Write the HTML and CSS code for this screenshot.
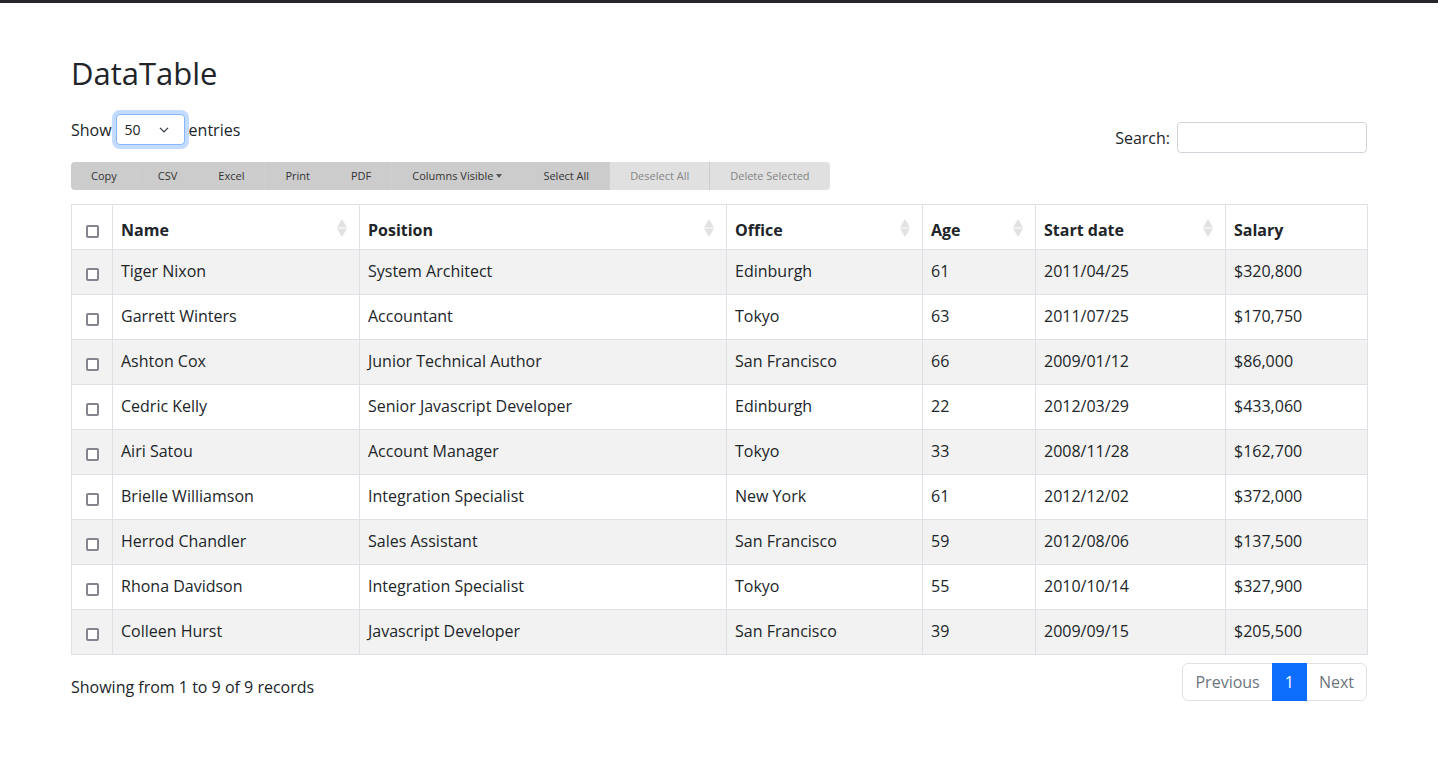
FILE: index.html
```html
<!DOCTYPE html>
<html lang="en">
<head>
<meta charset="utf-8">
<title>DataTable</title>
<link rel="stylesheet" href="styles.css">
</head>
<body>
<div class="topbar"></div>
<main class="container">
  <h2 class="title">DataTable</h2>
  <div class="controls">
    <div class="length">
      <span>Show</span>
      <select class="length-select"><option>50</option></select>
      <span>entries</span>
    </div>
    <div class="search">
      <label for="q">Search:</label>
      <input id="q" class="search-input" type="search">
    </div>
  </div>
  <div class="btn-bar">
    <button class="dt-btn">Copy</button>
    <button class="dt-btn">CSV</button>
    <button class="dt-btn">Excel</button>
    <button class="dt-btn">Print</button>
    <button class="dt-btn">PDF</button>
    <button class="dt-btn">Columns Visible <span class="caret"></span></button>
    <button class="dt-btn">Select All</button>
    <button class="dt-btn disabled">Deselect All</button>
    <button class="dt-btn disabled">Delete Selected</button>
  </div>
  <table class="dt">
    <colgroup>
      <col class="c-chk"><col class="c-name"><col class="c-pos"><col class="c-office"><col class="c-age"><col class="c-date"><col class="c-salary">
    </colgroup>
    <thead>
      <tr>
        <th class="chk-cell"><input class="cb" type="checkbox"></th>
        <th><div class="th-inner"><span>Name</span><svg class="sort" viewBox="0 0 10 18" width="10" height="18"><polygon points="5,0 10,8.6 0,8.6"/><polygon points="0,9.4 10,9.4 5,18"/></svg></div></th>
        <th><div class="th-inner"><span>Position</span><svg class="sort" viewBox="0 0 10 18" width="10" height="18"><polygon points="5,0 10,8.6 0,8.6"/><polygon points="0,9.4 10,9.4 5,18"/></svg></div></th>
        <th><div class="th-inner"><span>Office</span><svg class="sort" viewBox="0 0 10 18" width="10" height="18"><polygon points="5,0 10,8.6 0,8.6"/><polygon points="0,9.4 10,9.4 5,18"/></svg></div></th>
        <th><div class="th-inner"><span>Age</span><svg class="sort" viewBox="0 0 10 18" width="10" height="18"><polygon points="5,0 10,8.6 0,8.6"/><polygon points="0,9.4 10,9.4 5,18"/></svg></div></th>
        <th><div class="th-inner"><span>Start date</span><svg class="sort" viewBox="0 0 10 18" width="10" height="18"><polygon points="5,0 10,8.6 0,8.6"/><polygon points="0,9.4 10,9.4 5,18"/></svg></div></th>
        <th><div class="th-inner"><span>Salary</span></div></th>
      </tr>
    </thead>
    <tbody>
      <tr><td class="chk-cell"><input class="cb" type="checkbox"></td><td>Tiger Nixon</td><td>System Architect</td><td>Edinburgh</td><td>61</td><td>2011/04/25</td><td>$320,800</td></tr>
      <tr><td class="chk-cell"><input class="cb" type="checkbox"></td><td>Garrett Winters</td><td>Accountant</td><td>Tokyo</td><td>63</td><td>2011/07/25</td><td>$170,750</td></tr>
      <tr><td class="chk-cell"><input class="cb" type="checkbox"></td><td>Ashton Cox</td><td>Junior Technical Author</td><td>San Francisco</td><td>66</td><td>2009/01/12</td><td>$86,000</td></tr>
      <tr><td class="chk-cell"><input class="cb" type="checkbox"></td><td>Cedric Kelly</td><td>Senior Javascript Developer</td><td>Edinburgh</td><td>22</td><td>2012/03/29</td><td>$433,060</td></tr>
      <tr><td class="chk-cell"><input class="cb" type="checkbox"></td><td>Airi Satou</td><td>Account Manager</td><td>Tokyo</td><td>33</td><td>2008/11/28</td><td>$162,700</td></tr>
      <tr><td class="chk-cell"><input class="cb" type="checkbox"></td><td>Brielle Williamson</td><td>Integration Specialist</td><td>New York</td><td>61</td><td>2012/12/02</td><td>$372,000</td></tr>
      <tr><td class="chk-cell"><input class="cb" type="checkbox"></td><td>Herrod Chandler</td><td>Sales Assistant</td><td>San Francisco</td><td>59</td><td>2012/08/06</td><td>$137,500</td></tr>
      <tr><td class="chk-cell"><input class="cb" type="checkbox"></td><td>Rhona Davidson</td><td>Integration Specialist</td><td>Tokyo</td><td>55</td><td>2010/10/14</td><td>$327,900</td></tr>
      <tr><td class="chk-cell"><input class="cb" type="checkbox"></td><td>Colleen Hurst</td><td>Javascript Developer</td><td>San Francisco</td><td>39</td><td>2009/09/15</td><td>$205,500</td></tr>
    </tbody>
  </table>
  <div class="footer">
    <div class="info">Showing from 1 to 9 of 9 records</div>
    <ul class="pagination">
      <li class="page-item disabled"><span class="page-link">Previous</span></li>
      <li class="page-item active"><span class="page-link">1</span></li>
      <li class="page-item"><span class="page-link">Next</span></li>
    </ul>
  </div>
</main>
</body>
</html>
```
FILE: styles.css
```css
* { box-sizing: border-box; }

body {
  margin: 0;
  font-family: "Open Sans", "Noto Sans", sans-serif;
  font-size: 16px;
  line-height: 1.5;
  color: #212529;
  background: #fff;
}

.topbar {
  height: 3px;
  background: #25262b;
}

.container {
  max-width: 1296px;
  margin: 0 auto;
  padding: 51px 0 40px;
}

.title {
  margin: 0 0 22px;
  font-size: 31px;
  font-weight: 400;
  line-height: 38px;
}

.controls {
  display: flex;
  justify-content: space-between;
  align-items: flex-start;
}

.length {
  display: flex;
  align-items: center;
  gap: 4px;
  height: 31px;
}

.length-select {
  appearance: none;
  -webkit-appearance: none;
  width: 69px;
  height: 31px;
  padding: 0 0 0 8px;
  font-family: inherit;
  font-size: 14px;
  color: #212529;
  border: 1px solid #86b7fe;
  border-radius: 4px;
  box-shadow: 0 0 0 4px rgba(13, 110, 253, 0.25);
  outline: none;
  background-color: #fff;
  background-image: url("data:image/svg+xml,%3csvg xmlns='http://www.w3.org/2000/svg' viewBox='0 0 16 16'%3e%3cpath fill='none' stroke='%23343a40' stroke-linecap='round' stroke-linejoin='round' stroke-width='2' d='m2 5 6 6 6-6'/%3e%3c/svg%3e");
  background-repeat: no-repeat;
  background-position: right 14px center;
  background-size: 12px 10px;
}

.search {
  display: flex;
  align-items: center;
  gap: 7px;
  margin-top: 8px;
}

.search-input {
  width: 190px;
  height: 31px;
  border: 1px solid #ced4da;
  border-radius: 4px;
  padding: 0 8px;
  font-family: inherit;
  font-size: 14px;
  outline: none;
}

.btn-bar {
  display: flex;
  width: max-content;
  margin-top: 9px;
  height: 28px;
  border-radius: 4px;
  overflow: hidden;
}

.dt-btn {
  height: 28px;
  padding: 0 20px;
  border: 0;
  background: #cccccc;
  color: #333;
  font-family: inherit;
  font-size: 11px;
  line-height: 28px;
  cursor: pointer;
  display: flex;
  align-items: center;
  gap: 3px;
}

.dt-btn + .dt-btn {
  border-left: 1px solid #cfcfcf;
}

.dt-btn.disabled {
  background: #e0e0e0;
  color: #858585;
}

.dt-btn.disabled + .dt-btn.disabled {
  border-left: 1px solid #cccccc;
}

.caret {
  display: inline-block;
  width: 0;
  height: 0;
  border-top: 4px solid #555;
  border-left: 3px solid transparent;
  border-right: 3px solid transparent;
}

.dt {
  width: 100%;
  margin-top: 14px;
  border-collapse: collapse;
  table-layout: fixed;
  border: 1px solid #dee2e6;
}

.c-chk { width: 41px; }
.c-name { width: 247px; }
.c-pos { width: 367px; }
.c-office { width: 196px; }
.c-age { width: 113px; }
.c-date { width: 190px; }
.c-salary { width: 142px; }

.dt th,
.dt td {
  border: 1px solid #dee2e6;
  padding: 10px 8px;
  line-height: 24px;
  text-align: left;
  vertical-align: middle;
  white-space: nowrap;
}

.dt tbody td {
  padding: 9px 8px 11px;
}

.dt thead th {
  padding: 13px 8px 7px;
  font-weight: 700;
}

.dt tbody tr:nth-child(odd) td {
  background: #f2f2f2;
}

.dt .chk-cell {
  text-align: center;
  padding-left: 0;
  padding-right: 0;
}

.dt tbody .chk-cell {
  padding-top: 11px;
  padding-bottom: 9px;
}

.th-inner {
  display: flex;
  align-items: center;
  justify-content: space-between;
}

.sort {
  fill: #e2e2e2;
  margin-right: 4px;
  margin-bottom: 4px;
  flex: none;
}

.cb {
  appearance: none;
  -webkit-appearance: none;
  width: 13px;
  height: 13px;
  margin: 0;
  border: 2px solid #85848f;
  border-radius: 2px;
  background: #fff;
  vertical-align: middle;
}

.footer {
  display: flex;
  justify-content: space-between;
  align-items: flex-start;
  margin-top: 8px;
}

.info {
  margin-top: 12px;
}

.pagination {
  display: flex;
  list-style: none;
  margin: 0;
  padding: 0;
}

.page-link {
  display: block;
  padding: 6px 12px;
  line-height: 24px;
  border: 1px solid #dee2e6;
  color: #6c757d;
  background: #fff;
}

.page-item + .page-item .page-link {
  margin-left: -1px;
}

.page-item:first-child .page-link {
  border-radius: 6px 0 0 6px;
}

.page-item:last-child .page-link {
  border-radius: 0 6px 6px 0;
}

.page-item.active .page-link {
  background: #0d6efd;
  border-color: #0d6efd;
  color: #fff;
  position: relative;
}
```
